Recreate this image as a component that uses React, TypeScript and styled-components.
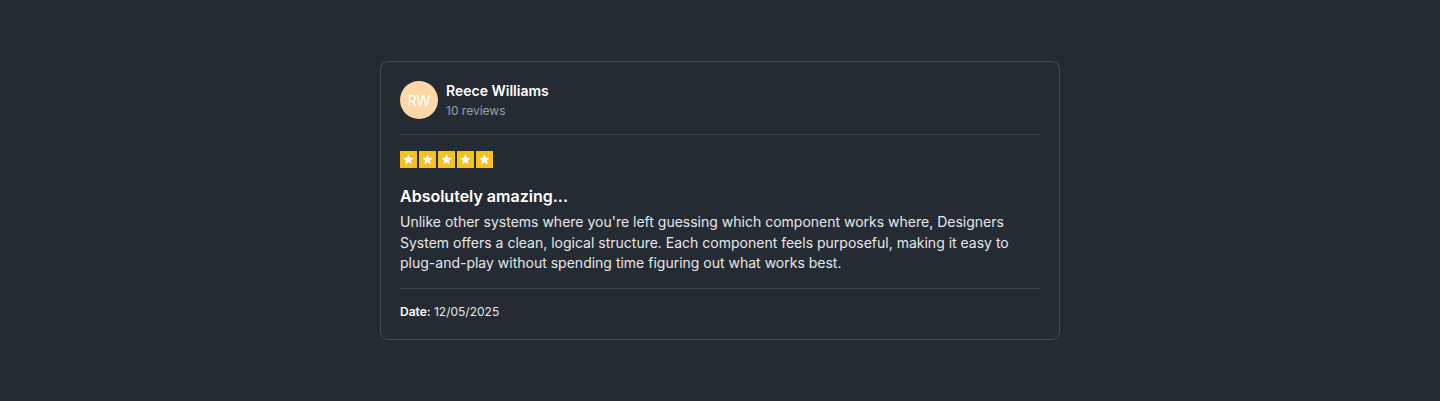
import styled, { createGlobalStyle } from 'styled-components';

const GlobalStyle = createGlobalStyle`
  body {
    margin: 0;
    background: #252b32;
    font-family: Inter, "Noto Sans", sans-serif;
  }
`;

const Page = styled.div`
  height: 401px;
  display: flex;
  align-items: center;
  justify-content: center;
`;

const Card = styled.div`
  box-sizing: border-box;
  width: 680px;
  padding: 19px;
  border: 1px solid #424952;
  border-radius: 8px;
  background: #252b32;
  display: flex;
  flex-direction: column;
`;

const Header = styled.div`
  display: flex;
  align-items: center;
  gap: 8px;
  margin-bottom: 15px;
`;

const Avatar = styled.div`
  width: 38px;
  height: 38px;
  border-radius: 50%;
  background: #fdd8a6;
  color: #ffffff;
  font-size: 14px;
  display: flex;
  align-items: center;
  justify-content: center;
`;

const Who = styled.div`
  display: flex;
  flex-direction: column;
  gap: 3px;
`;

const Name = styled.div`
  color: #ffffff;
  font-size: 14px;
  font-weight: 600;
  line-height: 18px;
`;

const Count = styled.div`
  color: #9aa1ab;
  font-size: 12px;
  line-height: 16px;
`;

const Divider = styled.hr<{ $after: number }>`
  border: 0;
  height: 1px;
  background: #3b424b;
  margin: 0 0 ${(p) => p.$after}px;
`;

const Stars = styled.div`
  display: flex;
  gap: 2px;
  margin-bottom: 16px;
`;

const Star = styled.div`
  width: 17px;
  height: 17px;
  background: #f6c21b;
  display: flex;
  align-items: center;
  justify-content: center;
`;

const Title = styled.div`
  color: #ffffff;
  font-size: 16px;
  font-weight: 600;
  line-height: 24px;
  margin-bottom: 4px;
`;

const Body = styled.p`
  margin: 0 0 14px;
  color: #e6e8eb;
  font-size: 14px;
  line-height: 20.5px;
`;

const DateLine = styled.div`
  color: #e6e8eb;
  font-size: 12px;
  line-height: 16px;

  b {
    font-weight: 600;
    color: #ffffff;
  }
`;

function StarIcon() {
  return (
    <svg width="13" height="13" viewBox="0 0 24 24">
      <path
        d="M12 2.5l2.9 6.1 6.6.8-4.9 4.6 1.3 6.6L12 17.3l-5.9 3.3 1.3-6.6-4.9-4.6 6.6-.8z"
        fill="#ffffff"
      />
    </svg>
  );
}

export default function App() {
  return (
    <>
      <GlobalStyle />
      <Page>
        <Card>
          <Header>
            <Avatar>RW</Avatar>
            <Who>
              <Name>Reece Williams</Name>
              <Count>10 reviews</Count>
            </Who>
          </Header>
          <Divider $after={16} />
          <Stars>
            {[0, 1, 2, 3, 4].map((i) => (
              <Star key={i}>
                <StarIcon />
              </Star>
            ))}
          </Stars>
          <Title>Absolutely amazing...</Title>
          <Body>
            Unlike other systems where you're left guessing which component works where, Designers
            System offers a clean, logical structure. Each component feels purposeful, making it easy to
            plug-and-play without spending time figuring out what works best.
          </Body>
          <Divider $after={15} />
          <DateLine>
            <b>Date:</b> 12/05/2025
          </DateLine>
        </Card>
      </Page>
    </>
  );
}
